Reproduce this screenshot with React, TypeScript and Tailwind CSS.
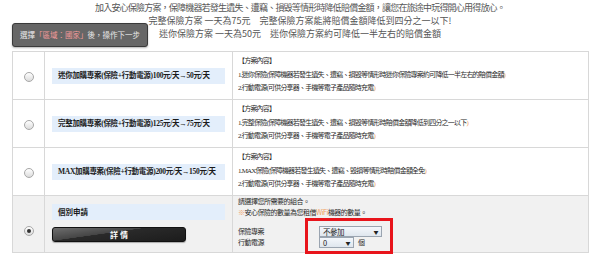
import React from 'react'

const zh = { fontFamily: '"Noto Sans CJK TC", "Noto Sans", sans-serif' }
const serif = { fontFamily: '"Liberation Serif", "Noto Sans CJK TC", serif' }

const plans = [
  {
    label: '迷你加購專案(保險+行動電源)100元/天→50元/天',
    line1: '1.迷你保險(保障機器若發生遺失、遭竊、損毀等情形時迷你保險專案約可降低一半左右的賠償金額',
  },
  {
    label: '完整加購專案(保險+行動電源)125元/天→75元/天',
    line1: '1.完整保險(保障機器若發生遺失、遭竊、損毀等情形時賠償金額降低到四分之一以下',
  },
  {
    label: 'MAX加購專案(保險+行動電源)200元/天→150元/天',
    line1: '1.MAX保險(保障機器若發生遺失、遭竊、毀損等情形時賠償金額全免',
  },
]

function Radio({ checked }: { checked?: boolean }) {
  return (
    <span className="inline-flex w-[10px] h-[10px] rounded-full border border-[#a8a8a8] bg-gradient-to-b from-white to-[#dcdcdc] items-center justify-center">
      {checked && <span className="w-[4px] h-[4px] rounded-full bg-[#333]" />}
    </span>
  )
}

function Select({ value, width }: { value: string; width: string }) {
  return (
    <span
      className={`inline-flex items-center justify-between h-[11px] border border-[#9aa4b0] bg-gradient-to-b from-[#f4f7fb] to-[#dfe6ee] px-[3px] text-[7.5px] text-[#222] ${width}`}
      style={zh}
    >
      <span>{value}</span>
      <span className="text-[5px]">▼</span>
    </span>
  )
}

export default function App() {
  return (
    <div className="relative w-[600px] h-[264px] bg-white overflow-hidden text-[#555]">
      {/* intro text */}
      <div className="text-center text-[9px] leading-[13px] pt-[1px]" style={zh}>
        <p className="tracking-[-0.8px]">加入安心保險方案，保障機器若發生遺失、遭竊、損毀等情形時降低賠償金額，讓您在旅途中玩得開心用得放心。</p>
        <p>完整保險方案 一天為75元　完整保險方案能將賠償金額降低到四分之一以下!</p>
        <p>迷你保險方案 一天為50元　迷你保險方案約可降低一半左右的賠償金額</p>
      </div>

      {/* hint bubble */}
      <div
        className="absolute left-[12px] top-[23px] w-[136px] h-[24px] rounded-[3px] border border-[#3a3a3a] bg-[#666] flex items-center justify-center text-[7.5px] text-[#e8e8e8] shadow-[0_1px_2px_rgba(0,0,0,0.3)]"
        style={zh}
      >
        選擇<span className="text-[#f39a9a]">「區域：國家」</span>後，操作下一步
      </div>

      <table className="ml-[12px] mt-[11px] w-[577px] border-collapse border border-[#d8d8d8]">
        <tbody>
          {plans.map((p) => (
            <tr key={p.label} className="h-[48px] border-b border-[#d8d8d8]">
              <td className="w-[32px] border-r border-[#d8d8d8] text-center align-middle">
                <Radio />
              </td>
              <td className="w-[188px] border-r border-[#d8d8d8] align-middle px-[7px]">
                <div className="h-[16px] bg-[#e3eefb] flex items-center px-[6px] text-[7.5px] font-bold text-[#1a1a1a] whitespace-nowrap tracking-[-0.3px]" style={serif}>
                  {p.label}
                </div>
              </td>
              <td className="align-top pl-[5px] pt-[3px] text-[7px] leading-[13.5px] text-[#2a2a2a] tracking-[-0.8px]" style={serif}>
                <div>【方案內容】</div>
                <div>
                  {p.line1}
                  <span className="text-[#f0a060]">)</span>
                </div>
                <div>
                  2.行動電源(可供分享器、手機等電子產品隨時充電<span className="text-[#f0a060]">)</span>
                </div>
              </td>
            </tr>
          ))}
          <tr className="h-[57px] bg-[#f1f1f1]">
            <td className="border-r border-[#d8d8d8] text-center align-top pt-[19px]">
              <Radio checked />
            </td>
            <td className="border-r border-[#d8d8d8] align-top px-[7px] pt-[8px]">
              <div className="h-[16px] bg-[#e3eefb] flex items-center px-[6px] text-[7.5px] font-bold text-[#1a1a1a]" style={zh}>
                個別申請
              </div>
              <div className="mt-[7px] w-[134px] h-[15px] rounded-[3px] border border-[#111] bg-[linear-gradient(172deg,#6e6e6e_0%,#454545_40%,#2a2a2a_41%,#1c1c1c_100%)] flex items-center justify-center text-[8px] font-bold text-white shadow-[0_1px_1px_rgba(0,0,0,0.3)]" style={zh}>
                詳 情
              </div>
            </td>
            <td className="align-top pl-[5px] text-[7px] leading-[11px] text-[#2a2a2a] tracking-[-0.5px]" style={zh}>
              <div>請選擇您所需要的組合。</div>
              <div>
                <span className="text-[#f0a060]">※</span>安心保險的數量為您租借
                <span className="text-[#f0a060]">WiFi</span>機器的數量。
              </div>
              <div className="flex items-center h-[11px] mt-[8px]">
                <span className="w-[81px]">保險專案</span>
                <Select value="不參加" width="w-[63px]" />
              </div>
              <div className="flex items-center h-[11px]">
                <span className="w-[81px]">行動電源</span>
                <Select value="0" width="w-[35px]" />
                <span className="ml-[4px]">個</span>
              </div>
            </td>
          </tr>
        </tbody>
      </table>

      {/* highlight box */}
      <div className="absolute left-[305px] top-[218px] w-[88px] h-[36px] border-[3px] border-[#e8141b]" />
    </div>
  )
}
